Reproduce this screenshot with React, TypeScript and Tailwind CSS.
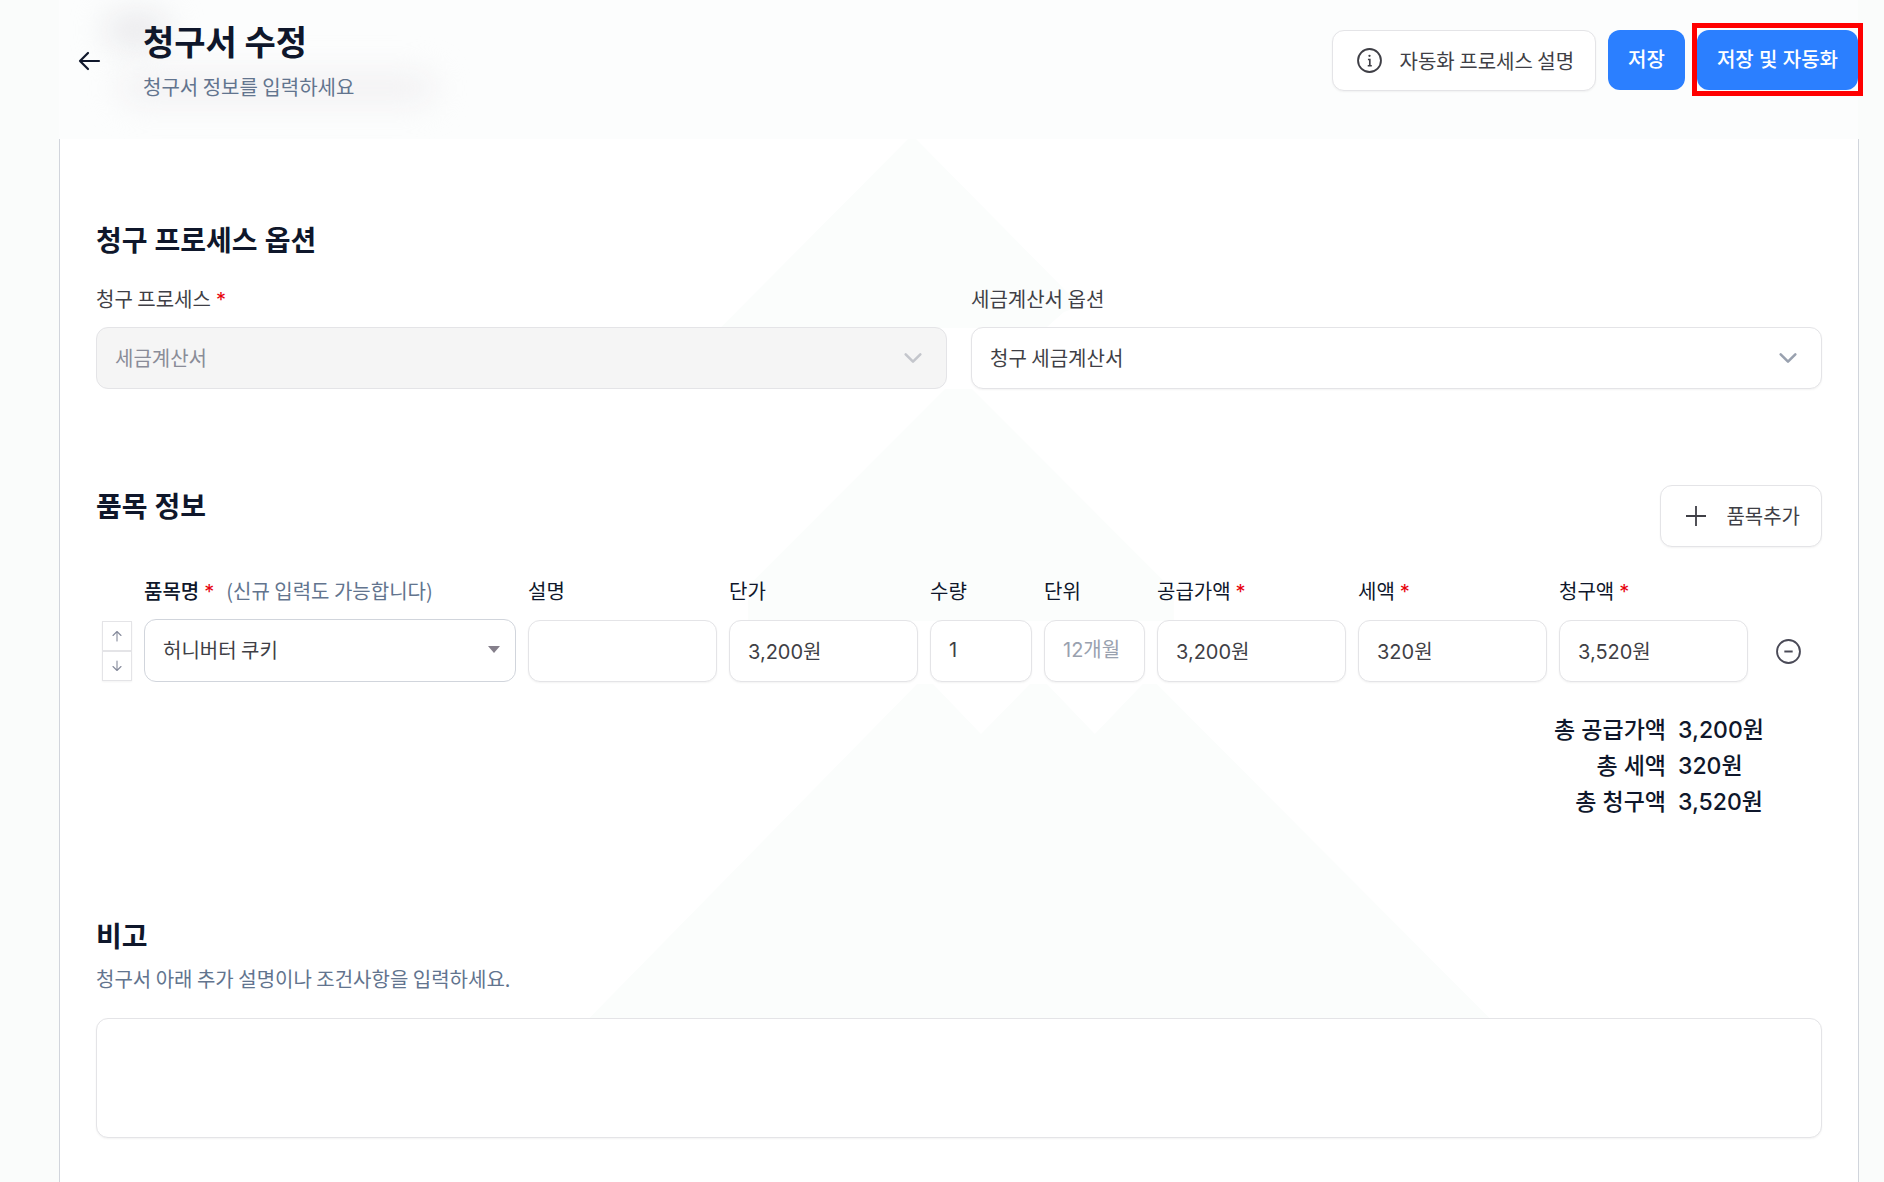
import type { ReactNode } from "react";
import { useId } from "react";
import clsx from "clsx";

const interFont = "font-['Inter','Noto_Sans_CJK_KR',sans-serif]";

const fieldClass =
  "h-[62px] w-full min-w-0 rounded-xl border border-[#e4e4e7] bg-white px-[18px] text-[20px] text-[#3f3f46] shadow-xs outline-none placeholder:text-[#99a1af]";

const primaryButtonClass =
  "h-[60px] rounded-xl bg-[#2b7fff] px-5 text-[20px] font-medium text-white";

function Required() {
  return <span className={clsx(interFont, "ml-[5px] leading-none text-red-600")}>*</span>;
}

function ChevronIcon({ className }: { className?: string }) {
  return (
    <svg viewBox="0 0 24 24" fill="none" className={className} aria-hidden="true">
      <path
        d="M4 8l8 8 8-8"
        stroke="currentColor"
        strokeWidth="2.8"
        strokeLinecap="round"
        strokeLinejoin="round"
      />
    </svg>
  );
}

function ArrowIcon({ className }: { className?: string }) {
  return (
    <svg viewBox="0 0 24 24" fill="none" className={className} aria-hidden="true">
      <path
        d="M22 12H3M11 4l-8 8 8 8"
        stroke="currentColor"
        strokeWidth="2.2"
        strokeLinecap="round"
        strokeLinejoin="round"
      />
    </svg>
  );
}

function ProcessSelect({
  label,
  value,
  required,
  disabled,
}: {
  label: string;
  value: string;
  required?: boolean;
  disabled?: boolean;
}) {
  const id = useId();

  return (
    <div className="min-w-0">
      <label htmlFor={id} className="block text-[20px] leading-7 text-[#3f3f46]">
        {label}
        {required && <Required />}
      </label>
      <div className="relative mt-3.5">
        <select
          id={id}
          disabled={disabled}
          className={clsx(
            fieldClass,
            "appearance-none disabled:bg-[#f5f5f5] disabled:text-[#8a8c98] disabled:opacity-100 disabled:shadow-none"
          )}
        >
          <option>{value}</option>
        </select>
        <ChevronIcon
          className={clsx(
            "pointer-events-none absolute top-5 right-[23px] h-[22px] w-[22px]",
            disabled ? "text-[#c4c6cc]" : "text-[#99a1af]"
          )}
        />
      </div>
    </div>
  );
}

function ItemField({
  label,
  value,
  placeholder,
  required,
}: {
  label: string;
  value?: string;
  placeholder?: string;
  required?: boolean;
}) {
  const id = useId();

  return (
    <div className="min-w-0">
      <label htmlFor={id} className="block text-[20px] leading-7 text-slate-900">
        {label}
        {required && <Required />}
      </label>
      <input
        id={id}
        defaultValue={value}
        placeholder={placeholder}
        className={clsx(fieldClass, interFont, "mt-[15px] block pb-0.5")}
      />
    </div>
  );
}

function SectionTitle({ children }: { children: ReactNode }) {
  return (
    <h2 className={clsx(interFont, "text-[28px] leading-9 font-semibold text-slate-900")}>
      {children}
    </h2>
  );
}

function Header() {
  return (
    <header className="relative mr-[26px] ml-[59px] flex h-[139px] items-start justify-between bg-[#fcfdfd]">
      <div className="absolute top-[14px] left-[46px] h-8 w-[64px] rounded-full bg-[#e8e8eb] blur-lg" />
      <div className="absolute top-[74px] left-[60px] h-7 w-[316px] rounded-full bg-[#f1f0f2] blur-lg" />

      <div className="relative flex">
        <button
          type="button"
          aria-label="뒤로"
          className="mt-[49px] ml-[18px] flex h-6 w-6 items-center justify-center text-slate-900"
        >
          <ArrowIcon className="h-6 w-6" />
        </button>
        <div className="mt-[19px] ml-[42px]">
          <h1 className="text-[34px] leading-[44px] font-bold text-slate-900">
            청구서 수정
          </h1>
          <p className="mt-2.5 text-[20px] leading-7 text-slate-500">
            청구서 정보를 입력하세요
          </p>
        </div>
      </div>

      <div className="relative mt-[30px] flex gap-3">
        <button
          type="button"
          className="flex h-[61px] items-center gap-[18px] rounded-xl border border-[#e4e4e7] bg-white pr-[21px] pl-6 text-[20px] text-[#3f3f46] shadow-xs"
        >
          <svg viewBox="0 0 24 24" fill="none" className="h-[25px] w-[25px]" aria-hidden="true">
            <circle cx="12" cy="12" r="11" stroke="currentColor" strokeWidth="1.8" />
            <circle cx="12" cy="7.5" r="1.1" fill="currentColor" />
            <path d="M10.5 11H12.3v6M10.3 17h3.9" stroke="currentColor" strokeWidth="1.6" />
          </svg>
          자동화 프로세스 설명
        </button>
        <button type="button" className={clsx(primaryButtonClass, interFont)}>
          저장
        </button>
        <div className="relative">
          <button type="button" className={clsx(primaryButtonClass, interFont)}>
            저장 및 자동화
          </button>
          <div className="pointer-events-none absolute -inset-x-[5px] -top-[7px] h-[73px] border-[5px] border-[#ff0000]" />
        </div>
      </div>
    </header>
  );
}

function Backdrop() {
  return (
    <svg
      viewBox="0 0 1800 1044"
      className="pointer-events-none absolute top-0 left-0 h-[1044px] w-full"
      preserveAspectRatio="none"
      aria-hidden="true"
    >
      <g fill="#fbfdfc">
        <path d="M849 0 H857 L1022 167 L1005 173 L987 189 H661 Z" />
        <path d="M886 250 H913 L1115 452 V482 H689 V447 Z" />
        <path d="M858 545 H874 L922 595 L971 545 H988 L1036 595 L1084 545 H1098 L1431 879 H530 Z" />
      </g>
    </svg>
  );
}

function ItemRow() {
  return (
    <div className="mt-[30px] grid grid-cols-[36px_372fr_189fr_189fr_102fr_101fr_189fr_189fr_189fr_62px] items-end gap-3">
      <div className="mb-px flex flex-col items-end">
        <button
          type="button"
          aria-label="위로 이동"
          className="flex h-[30px] w-[30px] items-center justify-center border border-[#e4e4e7] bg-white text-[#858a9b] shadow-xs"
        >
          <ArrowIcon className="h-3 w-3 rotate-90" />
        </button>
        <button
          type="button"
          aria-label="아래로 이동"
          className="flex h-[30px] w-[30px] items-center justify-center border border-[#e4e4e7] bg-white text-[#858a9b] shadow-xs"
        >
          <ArrowIcon className="h-3 w-3 -rotate-90" />
        </button>
      </div>

      <div className="min-w-0">
        <label htmlFor="item-name" className="block text-[20px] leading-7 text-slate-900">
          <span className="font-medium">품목명</span>
          <Required />
          <span className="ml-3 text-slate-500">(신규 입력도 가능합니다)</span>
        </label>
        <div className="relative mt-3.5">
          <select
            id="item-name"
            className="block h-[63px] w-full appearance-none rounded-xl border border-[#d1d5dc] bg-white px-[18px] pb-0.5 text-[20px] text-[#3f3f46] outline-none"
          >
            <option>허니버터 쿠키</option>
          </select>
          <svg
            viewBox="0 0 12 7"
            className="pointer-events-none absolute top-[27px] right-4 h-[7px] w-3 text-[#857f8b]"
            aria-hidden="true"
          >
            <path d="M0 0h12L6 7z" fill="currentColor" />
          </svg>
        </div>
      </div>

      <ItemField label="설명" />
      <ItemField label="단가" value="3,200원" />
      <ItemField label="수량" value="1" />
      <ItemField label="단위" placeholder="12개월" />
      <ItemField label="공급가액" value="3,200원" required />
      <ItemField label="세액" value="320원" required />
      <ItemField label="청구액" value="3,520원" required />

      <button
        type="button"
        aria-label="품목 삭제"
        className="flex h-[62px] items-center pl-4 text-[#4a4a57]"
      >
        <svg viewBox="0 0 24 24" fill="none" className="h-[25px] w-[25px]" aria-hidden="true">
          <circle cx="12" cy="12" r="11" stroke="currentColor" strokeWidth="1.8" />
          <path d="M8 12h8" stroke="currentColor" strokeWidth="1.9" />
        </svg>
      </button>
    </div>
  );
}

const totals = [
  { label: "총 공급가액", value: "3,200원" },
  { label: "총 세액", value: "320원" },
  { label: "총 청구액", value: "3,520원" },
];

export default function App() {
  return (
    <div className="flex min-h-screen flex-col bg-[#fafcfb] font-['Noto_Sans_CJK_KR','Inter',sans-serif]">
      <Header />

      <main className="relative mr-[25px] ml-[59px] flex-1 border-x border-[#d1d5dc] bg-white">
        <Backdrop />

        <div className="relative px-9 pt-[84px] pb-11">
          <section>
            <SectionTitle>청구 프로세스 옵션</SectionTitle>
            <div className="mt-[26px] grid grid-cols-2 gap-6">
              <ProcessSelect label="청구 프로세스" value="세금계산서" required disabled />
              <ProcessSelect label="세금계산서 옵션" value="청구 세금계산서" />
            </div>
          </section>

          <section className="mt-24">
            <div className="flex items-start justify-between">
              <div className="mt-1">
                <SectionTitle>품목 정보</SectionTitle>
              </div>
              <button
                type="button"
                className="flex h-[62px] items-center gap-5 rounded-xl border border-[#e4e4e7] bg-white pr-[21px] pl-[25px] text-[20px] text-[#3f3f46] shadow-xs"
              >
                <svg viewBox="0 0 20 20" className="h-5 w-5" aria-hidden="true">
                  <path d="M10 0v20M0 10h20" stroke="currentColor" strokeWidth="1.8" />
                </svg>
                품목추가
              </button>
            </div>

            <ItemRow />

            <dl
              className={clsx(
                interFont,
                "mt-[30px] ml-auto grid w-fit grid-cols-[auto_144px] gap-x-3 text-[23px] leading-9 font-medium text-slate-900"
              )}
            >
              {totals.map(({ label, value }) => (
                <div key={label} className="contents">
                  <dt className="text-right">{label}</dt>
                  <dd>{value}</dd>
                </div>
              ))}
            </dl>
          </section>

          <section className="mt-[99px]">
            <SectionTitle>
              <label htmlFor="memo">비고</label>
            </SectionTitle>
            <p className="mt-2.5 text-[20px] leading-7 text-slate-500">
              청구서 아래 추가 설명이나 조건사항을 입력하세요.
            </p>
            <textarea
              id="memo"
              className="mt-[25px] block h-[120px] w-full resize-none rounded-xl border border-[#e4e4e7] bg-white px-[18px] py-4 text-[20px] text-[#3f3f46] shadow-xs outline-none"
            />
          </section>
        </div>
      </main>
    </div>
  );
}
